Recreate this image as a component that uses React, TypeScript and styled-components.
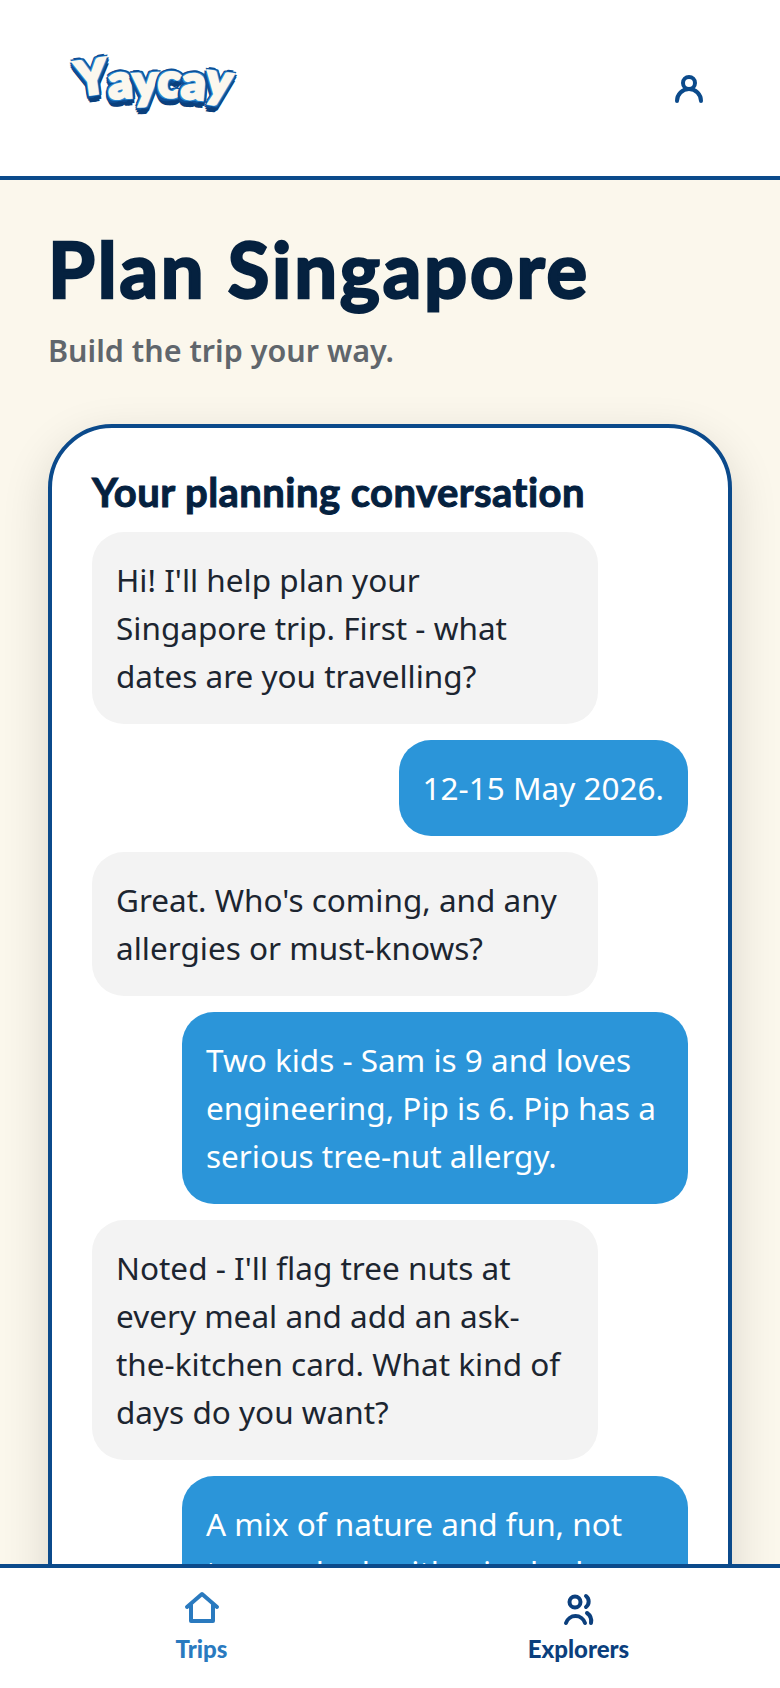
import styled, { createGlobalStyle } from "styled-components";

const GlobalStyle = createGlobalStyle`
  * {
    box-sizing: border-box;
  }
  html, body {
    margin: 0;
    padding: 0;
    background: #fbf7ec;
    font-family: "Noto Sans", "Lato", sans-serif;
  }
`;

const Screen = styled.div`
  height: 100vh;
  display: flex;
  flex-direction: column;
  overflow: hidden;
`;

const Header = styled.header`
  flex: none;
  height: 180px;
  padding: 52px 75px 0 76px;
  display: flex;
  justify-content: space-between;
  align-items: flex-start;
  background: #fff;
  border-bottom: 4px solid #0b4a8b;
`;

const Logo = styled.div`
  display: flex;
  height: 54px;
  align-items: center;
  font-family: "Lato", sans-serif;
  font-size: 47px;
  font-weight: 900;
  line-height: 1;
  color: #fbf7ee;
  letter-spacing: 0.8px;
  -webkit-text-stroke: 3px #fbf7ee;
  text-shadow:
    2px 0 0 #2b86cf, -2px 0 0 #2b86cf, 0 2px 0 #2b86cf, 0 -2px 0 #2b86cf,
    2px 2px 0 #2b86cf, -2px -2px 0 #2b86cf, 2px -2px 0 #2b86cf, -2px 2px 0 #2b86cf,
    4px 0 0 #0d4f96, -4px 0 0 #0d4f96, 0 -4px 0 #0d4f96, 3px -3px 0 #0d4f96, -3px -3px 0 #0d4f96,
    3px 3px 0 #0d4f96, -3px 3px 0 #0d4f96, 4px 2px 0 #0d4f96, -4px 2px 0 #0d4f96,
    -4px 4px 0 #0d4f96, -3px 6px 0 #0a3f7c, 0 7px 0 #0a3f7c, 3px 6px 0 #0a3f7c, 1px 8px 0 #0a3f7c, -2px 8px 0 #0a3f7c;
`;

const LogoLetter = styled.span<{ $turn: number; $drop: number }>`
  display: block;
  transform: translateY(${(p) => p.$drop}px) rotate(${(p) => p.$turn}deg);
`;

const IconButton = styled.button`
  width: 32px;
  height: 32px;
  padding: 0;
  margin-top: 20px;
  border: 0;
  background: none;
  color: #0b4a8b;
`;

const Main = styled.main`
  flex: 1;
  min-height: 0;
  overflow: hidden;
  padding: 44px 48px 0;
`;

const Title = styled.h1`
  margin: 0;
  font-family: "Lato", sans-serif;
  font-size: 76px;
  line-height: 90px;
  font-weight: 700;
  color: #05213f;
  -webkit-text-stroke: 2.5px #05213f;
  letter-spacing: 2.8px;
`;

const Subtitle = styled.p`
  margin: 12px 0 0;
  font-size: 30.5px;
  line-height: 48px;
  font-weight: 600;
  color: #60666c;
`;

const Card = styled.section`
  margin-top: 50px;
  padding: 40px 40px 0;
  height: 1400px;
  background: #fff;
  border: 4px solid #0b4a8b;
  border-radius: 64px;
  box-shadow: 0 16px 48px rgba(0, 0, 0, 0.14);
`;

const CardTitle = styled.h2`
  margin: 0 0 16px;
  font-family: "Lato", sans-serif;
  font-size: 40px;
  line-height: 48px;
  font-weight: 700;
  letter-spacing: 0.45px;
  color: #05213f;
  -webkit-text-stroke: 1px #05213f;
`;

const Messages = styled.div`
  display: flex;
  flex-direction: column;
  gap: 16px;
`;

const Bubble = styled.div<{ $mine?: boolean }>`
  max-width: 506px;
  padding: 24px;
  border-radius: 32px;
  font-size: 31.5px;
  line-height: 48px;
  align-self: ${(p) => (p.$mine ? "flex-end" : "flex-start")};
  background: ${(p) => (p.$mine ? "#2b95d9" : "#f3f3f3")};
  color: ${(p) => (p.$mine ? "#fff" : "#1c2530")};
`;

const BottomNav = styled.nav`
  flex: none;
  height: 124px;
  padding: 0 13px;
  display: grid;
  grid-template-columns: 1fr 1fr;
  background: #fff;
  border-top: 4px solid #0b4a8b;
`;

const NavItem = styled.a<{ $active?: boolean }>`
  display: flex;
  flex-direction: column;
  align-items: center;
  padding-top: 23px;
  font-family: "Lato", sans-serif;
  font-size: 24px;
  line-height: 32px;
  font-weight: 900;
  color: ${(p) => (p.$active ? "#2a7abf" : "#0b3f7d")};
`;

const NavIcon = styled.svg`
  display: block;
  width: 36px;
  height: 36px;
  margin-bottom: 6px;
  fill: none;
  stroke: currentColor;
  stroke-width: 4;
  stroke-linecap: round;
  stroke-linejoin: round;
`;

const logoLetters = [
  { ch: "Y", turn: -8, drop: -3 },
  { ch: "a", turn: -4, drop: 1 },
  { ch: "y", turn: -2, drop: 1 },
  { ch: "c", turn: 2, drop: 0 },
  { ch: "a", turn: 5, drop: 2 },
  { ch: "y", turn: 8, drop: 0 },
];

const messages = [
  { text: "Hi! I'll help plan your Singapore trip. First - what dates are you travelling?" },
  { text: "12-15 May 2026.", mine: true },
  { text: "Great. Who's coming, and any allergies or must-knows?" },
  { text: "Two kids - Sam is 9 and loves engineering, Pip is 6. Pip has a serious tree-nut allergy.", mine: true },
  { text: "Noted - I'll flag tree nuts at every meal and add an ask-the-kitchen card. What kind of days do you want?" },
  { text: "A mix of nature and fun, not too packed, with wiggle days.", mine: true },
];

export default function App() {
  return (
    <Screen>
      <GlobalStyle />
      <Header>
        <Logo>
          {logoLetters.map((l, i) => (
            <LogoLetter key={i} $turn={l.turn} $drop={l.drop}>
              {l.ch}
            </LogoLetter>
          ))}
        </Logo>
        <IconButton aria-label="Profile">
          <svg width="32" height="32" viewBox="0 0 32 32" fill="none" stroke="currentColor" strokeWidth="4" strokeLinecap="round">
            <circle cx="16" cy="11" r="6" />
            <path d="M4 29a12 12 0 0 1 24 0" />
          </svg>
        </IconButton>
      </Header>
      <Main>
        <Title>Plan Singapore</Title>
        <Subtitle>Build the trip your way.</Subtitle>
        <Card>
          <CardTitle>Your planning conversation</CardTitle>
          <Messages>
            {messages.map((m, i) => (
              <Bubble key={i} $mine={m.mine}>
                {m.text}
              </Bubble>
            ))}
          </Messages>
        </Card>
      </Main>
      <BottomNav>
        <NavItem $active>
          <NavIcon viewBox="0 0 36 36">
            <path d="M3 16L18 3l15 13" />
            <path d="M7 14v16h22V14" />
          </NavIcon>
          Trips
        </NavItem>
        <NavItem>
          <NavIcon viewBox="0 0 36 36">
            <circle cx="14" cy="11" r="5.5" />
            <path d="M25 5a7 7 0 0 1 0 11" />
            <path d="M5 32a10 10 0 0 1 19 0" />
            <path d="M26 22a10 10 0 0 1 4 10" />
          </NavIcon>
          Explorers
        </NavItem>
      </BottomNav>
    </Screen>
  );
}
